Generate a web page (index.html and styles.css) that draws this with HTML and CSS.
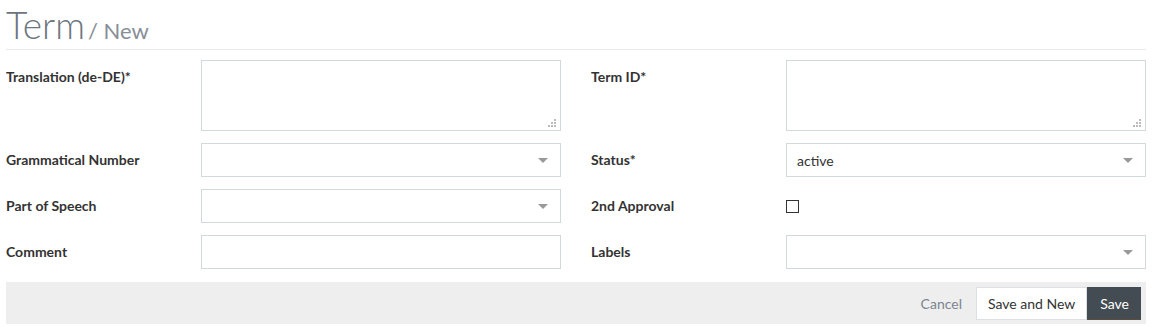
FILE: index.html
```html
<!DOCTYPE html>
<html lang="en">
<head>
  <meta charset="UTF-8">
  <title>Term / New</title>
  <link rel="stylesheet" href="styles.css">
</head>
<body>
  <div class="container">
    <h1 class="page-title">Term<small>/ New</small></h1>

    <form class="form-grid">
      <div class="field">
        <label class="field-label">Translation (de-DE)*</label>
        <div class="area-wrap"><textarea class="field-input field-area"></textarea></div>
      </div>
      <div class="field">
        <label class="field-label">Term ID*</label>
        <div class="area-wrap"><textarea class="field-input field-area"></textarea></div>
      </div>

      <div class="field">
        <label class="field-label">Grammatical Number</label>
        <div class="field-input field-select"><span></span><i class="caret"></i></div>
      </div>
      <div class="field">
        <label class="field-label">Status*</label>
        <div class="field-input field-select"><span>active</span><i class="caret"></i></div>
      </div>

      <div class="field">
        <label class="field-label">Part of Speech</label>
        <div class="field-input field-select"><span></span><i class="caret"></i></div>
      </div>
      <div class="field">
        <label class="field-label">2nd Approval</label>
        <div class="field-check"><span class="checkbox"></span></div>
      </div>

      <div class="field">
        <label class="field-label">Comment</label>
        <input type="text" class="field-input field-text">
      </div>
      <div class="field">
        <label class="field-label">Labels</label>
        <div class="field-input field-select"><span></span><i class="caret"></i></div>
      </div>
    </form>

    <div class="form-actions">
      <a class="btn-link">Cancel</a>
      <button class="btn btn-default">Save and New</button>
      <button class="btn btn-primary">Save</button>
    </div>
  </div>
</body>
</html>
```

FILE: styles.css
```css
body {
  margin: 0;
  font-family: Lato, 'Open Sans', sans-serif;
  font-size: 14px;
  color: #333;
  background: #fff;
}
.container {
  width: 1140px;
  margin-left: 6px;
}
.page-title {
  margin: 0;
  height: 50px;
  box-sizing: border-box;
  padding-top: 5px;
  border-bottom: 1px solid #e9e9e9;
  font-weight: 300;
  font-size: 37px;
  line-height: 40px;
  color: #6c7580;
}
.page-title small {
  font-size: 22px;
  font-weight: 400;
  color: #878e96;
  margin-left: 3px;
}
.form-grid {
  display: grid;
  grid-template-columns: 555px 555px;
  column-gap: 30px;
  row-gap: 12px;
  margin-top: 10px;
}
.field {
  display: grid;
  grid-template-columns: 195px 360px;
  align-items: start;
}
.field-label {
  font-weight: 700;
  font-size: 14px;
  line-height: 18px;
  padding-top: 8px;
  color: #333;
}
.field-input {
  box-sizing: border-box;
  width: 360px;
  border: 1px solid #d3d8db;
  background: #fff;
  font-family: inherit;
  font-size: 14px;
  color: #333;
  margin: 0;
  border-radius: 0;
}
.area-wrap {
  position: relative;
}
.area-wrap::after {
  content: "";
  position: absolute;
  right: 5px;
  bottom: 4px;
  width: 2px;
  height: 2px;
  background: #bbb;
  box-shadow: -3px 0 #bbb, -6px 0 #bbb, 0 -3px #bbb, -3px -3px #bbb, 0 -6px #bbb;
}
.field-area {
  height: 71px;
  resize: none;
  display: block;
}
.field-select,
.field-text {
  height: 34px;
}
.field-select {
  display: flex;
  align-items: center;
  justify-content: space-between;
  padding: 0 12px 0 10px;
}
.caret {
  width: 0;
  height: 0;
  border-left: 5px solid transparent;
  border-right: 5px solid transparent;
  border-top: 5px solid #999;
}
.field-check {
  display: flex;
  align-items: center;
  height: 34px;
}
.checkbox {
  width: 11px;
  height: 11px;
  border: 1px solid #333;
  background: #fff;
}
.form-actions {
  margin-top: 13px;
  background: #eeeeee;
  height: 42px;
  display: flex;
  justify-content: flex-end;
  align-items: center;
  padding-right: 5px;
}
.btn-link {
  color: #7b8590;
  font-size: 14px;
  margin-right: 14px;
}
.btn {
  height: 33px;
  font-family: inherit;
  font-size: 14px;
  border: 1px solid #dce0e3;
  padding: 0 11px;
  cursor: pointer;
}
.btn-default {
  background: #fff;
  color: #333;
}
.btn-primary {
  background: #434b53;
  border-color: #434b53;
  color: #fff;
  padding: 0 11px 0 12px;
  border-bottom: 1px solid #5b4c40;
}
```
